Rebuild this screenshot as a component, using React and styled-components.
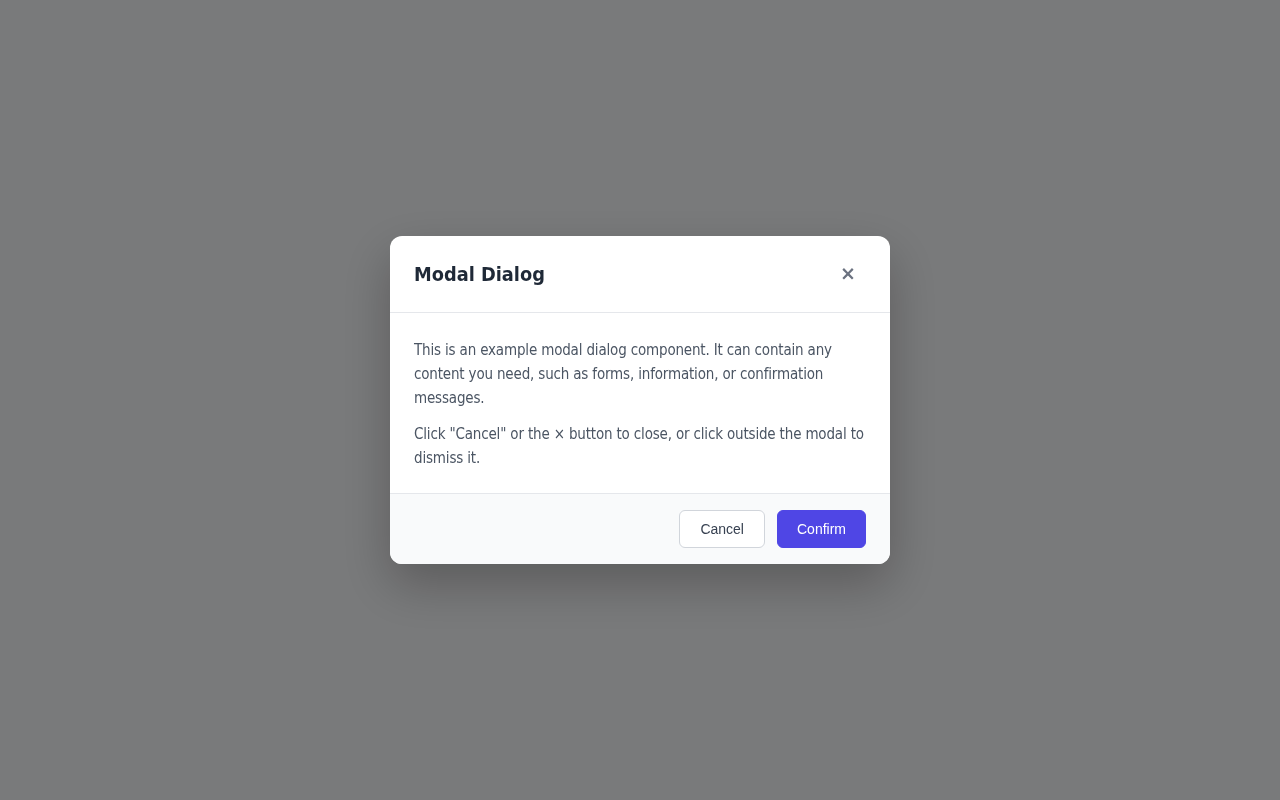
import React, { useState } from 'react';
import styled, { createGlobalStyle } from 'styled-components';

const GlobalStyle = createGlobalStyle`
  html, body {
    margin: 0;
    padding: 0;
    height: 100%;
  }
  body {
    font-family: 'DejaVu Sans Condensed', 'DejaVu Sans', sans-serif;
    background: #f3f4f6;
  }
  #root {
    height: 100%;
  }
`;

const Page = styled.div`
  height: 100vh;
  width: 100%;
`;

const Overlay = styled.div`
  position: fixed;
  inset: 0;
  background: rgba(0, 0, 0, 0.5);
  display: flex;
  align-items: center;
  justify-content: center;
`;

const Modal = styled.div`
  width: 500px;
  background: #ffffff;
  border-radius: 12px;
  box-shadow: 0 20px 50px rgba(0, 0, 0, 0.25);
  overflow: hidden;
`;

const Header = styled.div`
  display: flex;
  align-items: center;
  justify-content: space-between;
  padding: 20px 24px;
  border-bottom: 1px solid #e5e7eb;
`;

const Title = styled.h2`
  margin: 2px 0 0;
  font-size: 19.8px;
  line-height: 28px;
  font-weight: 700;
  color: #1f2937;
`;

const CloseButton = styled.button`
  width: 36px;
  height: 36px;
  display: flex;
  align-items: center;
  justify-content: center;
  background: none;
  border: none;
  border-radius: 6px;
  padding: 0 0 1px;
  font-size: 19px;
  font-weight: 700;
  line-height: 1;
  color: #6b7280;
  cursor: pointer;
  font-family: 'DejaVu Sans', sans-serif;
`;

const Body = styled.div`
  padding: 25px 24px 23px;
  color: #4b5563;
  font-size: 15px;
  letter-spacing: -0.17px;
  line-height: 24px;
`;

const Paragraph = styled.p`
  margin: 0 0 12px;

  &:last-child {
    margin-bottom: 0;
  }
`;

const Footer = styled.div`
  display: flex;
  justify-content: flex-end;
  gap: 12px;
  padding: 16px 24px;
  background: #f9fafb;
  border-top: 1px solid #e5e7eb;
`;

const Button = styled.button`
  height: 38px;
  padding: 0 ${(p) => (p.$primary ? '19px' : '20px')};
  border-radius: 6px;
  font-family: 'Liberation Sans', Arial, sans-serif;
  font-size: 14px;
  cursor: pointer;
  border: 1px solid ${(p) => (p.$primary ? '#4f46e5' : '#d1d5db')};
  background: ${(p) => (p.$primary ? '#4f46e5' : '#ffffff')};
  color: ${(p) => (p.$primary ? '#ffffff' : '#374151')};
`;

export default function App() {
  const [open, setOpen] = useState(true);

  return (
    <>
      <GlobalStyle />
      <Page>
        {open && (
          <Overlay onClick={() => setOpen(false)}>
            <Modal onClick={(e) => e.stopPropagation()}>
              <Header>
                <Title>Modal Dialog</Title>
                <CloseButton onClick={() => setOpen(false)}>×</CloseButton>
              </Header>
              <Body>
                <Paragraph>
                  This is an example modal dialog component. It can contain any
                  content you need, such as forms, information, or confirmation
                  messages.
                </Paragraph>
                <Paragraph>
                  Click "Cancel" or the × button to close, or click outside the
                  modal to dismiss it.
                </Paragraph>
              </Body>
              <Footer>
                <Button onClick={() => setOpen(false)}>Cancel</Button>
                <Button $primary onClick={() => setOpen(false)}>Confirm</Button>
              </Footer>
            </Modal>
          </Overlay>
        )}
      </Page>
    </>
  );
}
